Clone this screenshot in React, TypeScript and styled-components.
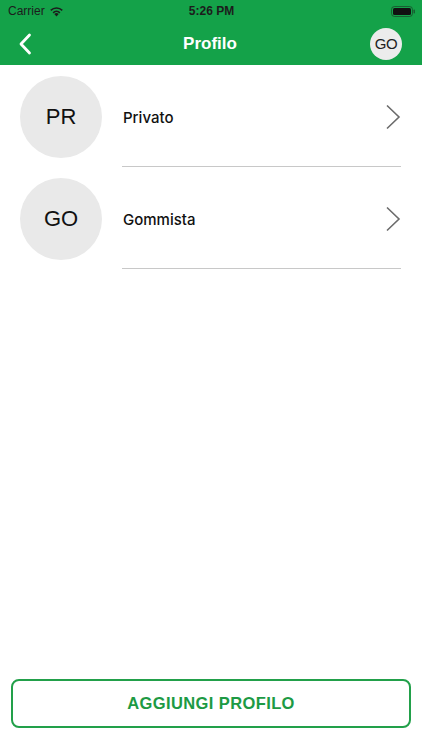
import styled, { createGlobalStyle } from "styled-components";

const GREEN = "#14a249";

const GlobalStyle = createGlobalStyle`
  html, body {
    margin: 0;
    padding: 0;
    background: #fff;
    font-family: "Liberation Sans", Arial, sans-serif;
  }
  * {
    box-sizing: border-box;
  }
`;

const Screen = styled.div`
  width: 422px;
  height: 750px;
  display: flex;
  flex-direction: column;
  background: #fff;
`;

const Header = styled.header`
  background: ${GREEN};
  height: 65px;
  display: flex;
  flex-direction: column;
`;

const StatusBar = styled.div`
  height: 22px;
  display: grid;
  grid-template-columns: 1fr auto 1fr;
  align-items: center;
  padding: 0 7px 0 8px;
  color: #1c1c1c;
  font-size: 12px;
`;

const Carrier = styled.div`
  display: flex;
  align-items: center;
  gap: 4px;
`;

const Clock = styled.div`
  font-weight: bold;
  font-size: 12px;
`;

const BatteryWrap = styled.div`
  display: flex;
  justify-content: flex-end;
`;

const NavBar = styled.div`
  flex: 1;
  display: grid;
  grid-template-columns: 60px 1fr 60px;
  align-items: center;
  padding: 0 20px 0 18px;
`;

const Title = styled.h1`
  margin: 0;
  text-align: center;
  color: #fff;
  font-size: 17px;
  font-weight: bold;
`;

const BackButton = styled.button`
  background: none;
  border: none;
  padding: 0;
  display: flex;
  align-items: center;
  cursor: pointer;
`;

const HeaderAvatar = styled.div`
  justify-self: end;
  width: 32px;
  height: 32px;
  border-radius: 50%;
  background: #ececec;
  color: #222;
  font-size: 15px;
  display: flex;
  align-items: center;
  justify-content: center;
  letter-spacing: -0.5px;
`;

const List = styled.ul`
  list-style: none;
  margin: 0;
  padding: 11px 0 0;
  flex: 1;
`;

const Item = styled.li`
  display: flex;
  padding-left: 20px;
  margin-bottom: 11px;
  cursor: pointer;
`;

const Avatar = styled.div`
  width: 82px;
  height: 82px;
  flex-shrink: 0;
  border-radius: 50%;
  background: #e9e9e9;
  color: #111;
  font-size: 22px;
  display: flex;
  align-items: center;
  justify-content: center;
`;

const Content = styled.div`
  flex: 1;
  margin-left: 20px;
  margin-right: 21px;
  padding-bottom: 8px;
  border-bottom: 1px solid #c8c8c8;
`;

const ContentRow = styled.div`
  height: 82px;
  display: flex;
  align-items: center;
  justify-content: space-between;
`;

const Label = styled.span`
  font-family: Inter, "Liberation Sans", sans-serif;
  font-size: 15px;
  font-weight: 500;
  color: #111;
  padding-left: 1px;
`;

const AddButton = styled.button`
  margin: 0 11px 22px;
  height: 49px;
  border: 2px solid #22a04a;
  border-radius: 8px;
  background: #fff;
  color: #1d9a44;
  font-family: "Liberation Sans", Arial, sans-serif;
  font-size: 16.5px;
  font-weight: bold;
  letter-spacing: 0.4px;
  cursor: pointer;
`;

const profiles = [
  { initials: "PR", name: "Privato" },
  { initials: "GO", name: "Gommista" },
];

const Chevron = () => (
  <svg width="16" height="26" viewBox="0 0 16 26" fill="none">
    <path d="M2 1.5 L14 13 L2 24.5" stroke="#6b6b6b" strokeWidth="1.6" />
  </svg>
);

export default function App() {
  return (
    <Screen>
      <GlobalStyle />
      <Header>
        <StatusBar>
          <Carrier>
            Carrier
            <svg width="15" height="11" viewBox="0 0 15 11">
              <path d="M7.5 10.5 L5.3 8 A3.2 3.2 0 0 1 9.7 8 Z" fill="#1c1c1c" />
              <path d="M3.6 6.2 A5.6 5.6 0 0 1 11.4 6.2 L10.3 7.4 A4 4 0 0 0 4.7 7.4 Z" fill="#1c1c1c" />
              <path d="M1.2 3.8 A9 9 0 0 1 13.8 3.8 L12.7 5 A7.4 7.4 0 0 0 2.3 5 Z" fill="#1c1c1c" />
            </svg>
          </Carrier>
          <Clock>5:26 PM</Clock>
          <BatteryWrap>
            <svg width="24" height="11" viewBox="0 0 24 11">
              <rect x="0.5" y="0.5" width="21" height="10" rx="3" fill="none" stroke="#1c1c1c" strokeOpacity="0.5" />
              <rect x="2" y="2" width="18" height="7" rx="1.5" fill="#111" />
              <rect x="22.5" y="3.5" width="1.5" height="4" rx="0.7" fill="#1c1c1c" fillOpacity="0.5" />
            </svg>
          </BatteryWrap>
        </StatusBar>
        <NavBar>
          <BackButton aria-label="Indietro">
            <svg width="14" height="22" viewBox="0 0 14 22" fill="none">
              <path d="M11.5 2 L3 11 L11.5 20" stroke="#fff" strokeWidth="2.8" strokeLinecap="round" strokeLinejoin="round" />
            </svg>
          </BackButton>
          <Title>Profilo</Title>
          <HeaderAvatar>GO</HeaderAvatar>
        </NavBar>
      </Header>
      <List>
        {profiles.map((p) => (
          <Item key={p.initials}>
            <Avatar>{p.initials}</Avatar>
            <Content>
              <ContentRow>
                <Label>{p.name}</Label>
                <Chevron />
              </ContentRow>
            </Content>
          </Item>
        ))}
      </List>
      <AddButton>AGGIUNGI PROFILO</AddButton>
    </Screen>
  );
}
